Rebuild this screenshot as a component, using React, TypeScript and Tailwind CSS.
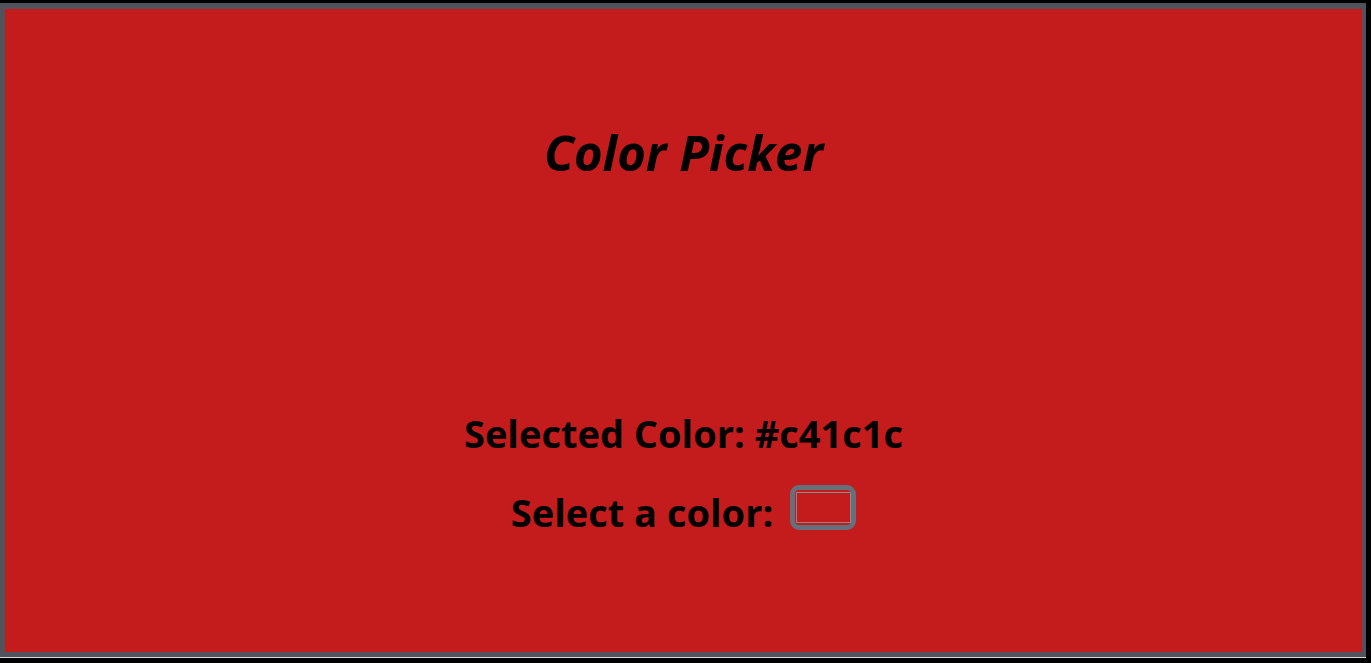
import React from "react";

export default function App() {
  return (
    <div className="h-[663px] w-[1371px] bg-black pt-[3px] overflow-hidden">
      <div className="w-[1366px] h-[654px] border-[#50535c] border-l-[5px] border-r-[4px] border-t-[6px] border-b-[5px] bg-[#c41c1c] text-black font-['Open_Sans',sans-serif] flex flex-col items-center">
        <h1 className="mt-[113px] text-[49px] leading-[60px] font-bold italic">Color Picker</h1>
        <p className="mt-[226px] text-[38px] leading-[50px] font-bold">Selected Color: #c41c1c</p>
        <div className="mt-[29px] flex items-start gap-[17px]">
          <span className="text-[38px] leading-[50px] font-bold">Select a color:</span>
          <div className="-mt-[2px] w-[66px] h-[45px] rounded-[9px] border-[5px] border-[#66707c] flex items-center justify-center">
            <div className="w-[55px] h-[31px] border border-[#8a8a8a] bg-[#c41c1c]" />
          </div>
        </div>
      </div>
      <div className="w-[1366px] h-px bg-[#d6d6d6]" />
    </div>
  );
}
